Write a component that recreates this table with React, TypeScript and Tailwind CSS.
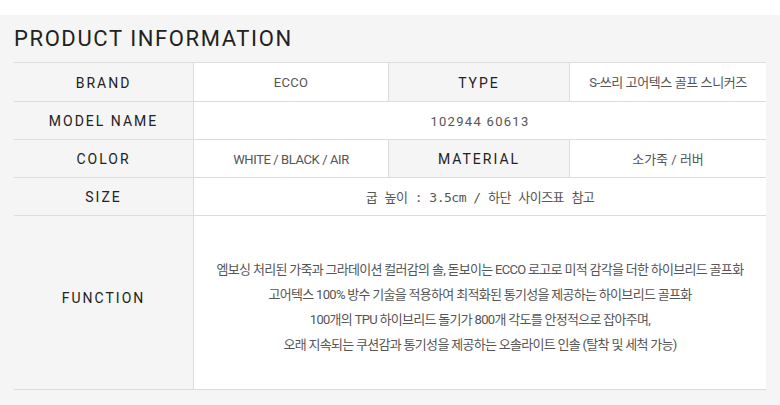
const rows = {
  label: "flex items-center justify-center bg-[#f5f5f5] pt-[2px] text-[14px] tracking-[2px] text-[#222]",
  value: "flex items-center justify-center bg-white pt-[2px] text-[13px] text-[#555]",
};

const functionLines = [
  "엠보싱 처리된 가죽과 그라데이션 컬러감의 솔, 돋보이는 ECCO 로고로 미적 감각을 더한 하이브리드 골프화",
  "고어텍스 100% 방수 기술을 적용하여 최적화된 통기성을 제공하는 하이브리드 골프화",
  "100개의 TPU 하이브리드 돌기가 800개 각도를 안정적으로 잡아주며,",
  "오래 지속되는 쿠션감과 통기성을 제공하는 오솔라이트 인솔 (탈착 및 세척 가능)",
];

export default function App() {
  return (
    <div className="w-[780px] h-[405px] overflow-hidden bg-white font-['Roboto','Noto_Sans_CJK_KR',sans-serif]">
      <div className="mt-[15px] h-[390px] bg-[#f5f5f5] pl-[14px] pr-[14px] pt-[9px]">
        <h2 className="text-[22px] leading-[30px] tracking-[1.6px] text-[#222]">PRODUCT INFORMATION</h2>
        <div className="mt-[8px] grid grid-cols-[180px_195px_181px_196px] grid-rows-[39px_38px_38px_38px_173px] border-t border-b border-[#dcdcdc]">
          <div className={`${rows.label} border-b border-r border-[#dcdcdc]`}>BRAND</div>
          <div className={`${rows.value} border-b border-r border-[#dcdcdc] tracking-[0.3px]`}>ECCO</div>
          <div className={`${rows.label} border-b border-r border-[#dcdcdc]`}>TYPE</div>
          <div className={`${rows.value} border-b border-[#dcdcdc] text-[11.5px] tracking-[-0.4px]`}>S-쓰리 고어텍스 골프 스니커즈</div>

          <div className={`${rows.label} border-b border-r border-[#dcdcdc]`}>MODEL NAME</div>
          <div className={`${rows.value} col-span-3 border-b border-[#dcdcdc] text-[13.5px] tracking-[1.3px]`}>102944 60613</div>

          <div className={`${rows.label} border-b border-r border-[#dcdcdc]`}>COLOR</div>
          <div className={`${rows.value} border-b border-r border-[#dcdcdc] tracking-[-0.4px]`}>WHITE / BLACK / AIR</div>
          <div className={`${rows.label} border-b border-r border-[#dcdcdc]`}>MATERIAL</div>
          <div className={`${rows.value} border-b border-[#dcdcdc] text-[11.5px]`}>소가죽 / 러버</div>

          <div className={`${rows.label} border-b border-r border-[#dcdcdc]`}>SIZE</div>
          <div className={`${rows.value} col-span-3 border-b border-[#dcdcdc] font-['DejaVu_Sans_Mono','Noto_Sans_CJK_KR',monospace] text-[11.5px] tracking-[-0.5px]`}>
            굽 높이 : 3.5cm / 하단 사이즈표 참고
          </div>

          <div className={`${rows.label} !pt-0 pb-[8px] border-r border-[#dcdcdc]`}>FUNCTION</div>
          <div className={`${rows.value} col-span-3 flex-col gap-[7px] pt-[9px] text-[11.5px] leading-[18px] tracking-[-0.7px] text-[#444]`}>
            {functionLines.map((line) => (
              <p key={line}>{line}</p>
            ))}
          </div>
        </div>
      </div>
    </div>
  );
}
